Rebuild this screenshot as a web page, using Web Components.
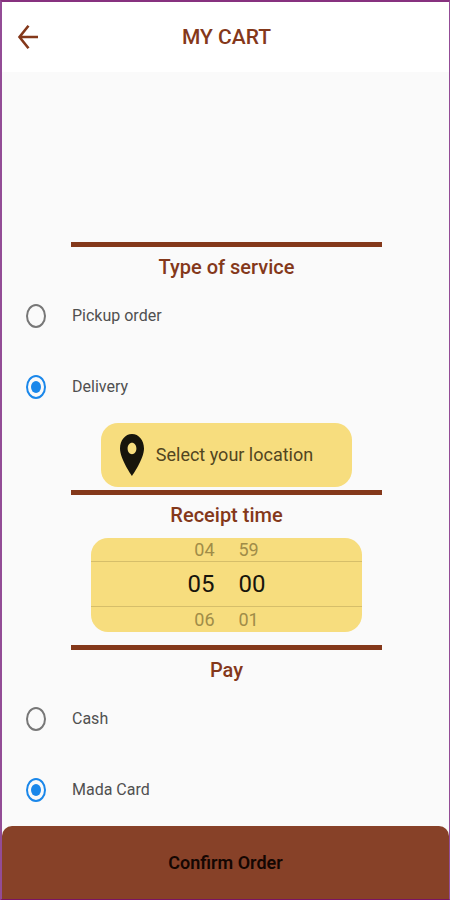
<!DOCTYPE html>
<html lang="en">
<head>
<meta charset="utf-8">
<meta name="viewport" content="width=device-width, initial-scale=1">
<title>My Cart</title>
<style>
  body { margin: 0; font-family: Roboto, "Liberation Sans", sans-serif; color: #505050; background: #fafafa;
    --brown: #84381a; --sand: #f7dd7e; --blue: #1a87ea; }
</style>
</head>
<body>
<cart-screen>
  <app-header slot="header">MY CART</app-header>
  <section-title>Type of service</section-title>
  <choice-list name="service" label="Type of service" options="Pickup order|Delivery" selected="Delivery"></choice-list>
  <location-button>Select your location</location-button>
  <section-title class="after-location">Receipt time</section-title>
  <time-picker hours="04 05 06" minutes="59 00 01"></time-picker>
  <section-title class="after-picker">Pay</section-title>
  <choice-list name="pay" label="Pay" options="Cash|Mada Card" selected="Mada Card"></choice-list>
  <confirm-bar slot="footer">Confirm Order</confirm-bar>
</cart-screen>

<script>
  const define = (name, html, setup) => customElements.define(name, class extends HTMLElement {
    connectedCallback() {
      if (this.shadowRoot) return;
      this.attachShadow({ mode: 'open' }).innerHTML = html;
      if (setup) setup(this, this.shadowRoot);
    }
  });

  define('cart-screen', `
    <style>
      :host { display: flex; flex-direction: column; box-sizing: border-box; min-height: 100vh;
        border: solid #934c96; border-width: 2px 1px 1px 2px; border-top-color: #87317f; border-bottom-color: #7a1464; }
      main { flex: 1; padding: 170px 0 0 2px; }
      ::slotted(location-button) { margin-top: 1px; }
      ::slotted(.after-location) { margin-top: 3px; }
      ::slotted(time-picker) { margin-top: 10px; }
      ::slotted(.after-picker) { margin-top: 13px; }
    </style>
    <slot name="header"></slot>
    <main><slot></slot></main>
    <slot name="footer"></slot>`);

  define('app-header', `
    <style>
      :host { display: block; background: #fff; color: var(--brown); }
      header { display: grid; grid-template-columns: 52px 1fr 50px; align-items: center; height: 70px; }
      button { display: grid; place-items: center; height: 48px; padding: 0; border: 0; background: none; color: inherit; cursor: pointer; }
      h1 { margin: 0; font-size: 21px; line-height: 28px; font-weight: 500; text-align: center; }
    </style>
    <header>
      <button type="button" aria-label="Back">
        <svg width="22" height="26" viewBox="0 0 22 26" fill="none" stroke="currentColor" stroke-width="2.6"><path d="M21 13H3M11.5 1.8L2.500 13l9 11.200"/></svg>
      </button>
      <h1><slot></slot></h1>
    </header>`);

  define('section-title', `
    <style>
      :host { display: block; color: var(--brown); }
      hr { width: 70%; height: 5px; margin: 0 auto; border: 0; background: var(--brown); }
      h2 { margin: 0; padding: 7px 0 0; font-size: 20px; line-height: 26px; font-weight: 500; text-align: center; }
    </style>
    <hr><h2><slot></slot></h2>`);

  define('choice-list', `
    <style>
      :host { display: block; }
      fieldset { margin: 0; padding: 0; border: 0; min-width: 0; }
      label { display: flex; align-items: center; gap: 26px; height: 71px; padding-left: 22px; font-size: 16px; line-height: 24px; cursor: pointer; }
      input { appearance: none; display: grid; place-items: center; flex: none; box-sizing: border-box; width: 20px; height: 24px; margin: 0; border: 2px solid #777; border-radius: 50%; }
      input:checked { border-color: var(--blue); }
      input:checked::before { content: ""; width: 10px; height: 12px; border-radius: 50%; background: var(--blue); }
    </style>
    <fieldset></fieldset>`, (host, root) => {
      const set = root.querySelector('fieldset');
      set.setAttribute('aria-label', host.getAttribute('label'));
      for (const text of host.getAttribute('options').split('|')) {
        const label = document.createElement('label');
        const input = document.createElement('input');
        input.type = 'radio';
        input.name = host.getAttribute('name');
        input.value = text;
        input.checked = text === host.getAttribute('selected');
        const span = document.createElement('span');
        span.textContent = text;
        label.append(input, span);
        set.append(label);
      }
    });

  define('location-button', `
    <style>
      :host { display: flex; justify-content: center; }
      button { display: flex; align-items: center; gap: 12px; height: 64px; padding: 0 39px 0 19px; border: 0; border-radius: 17px;
        background: var(--sand); color: #51451f; font: inherit; font-size: 18px; line-height: 26px; cursor: pointer; }
    </style>
    <button type="button">
      <svg width="24" height="42" viewBox="0 0 24 42" aria-hidden="true"><path fill="#17150c" fill-rule="evenodd" d="M12 0C5.200 0 0 6.200 0 14.500 0 25 12 42 12 42s12-17 12-27.500C24 6.200 18.800 0 12 0zm0 8.800c2.500 0 4.400 2.500 4.400 5.700s-1.900 5.700-4.400 5.700-4.400-2.500-4.400-5.700S9.500 8.800 12 8.800z"/></svg>
      <slot></slot>
    </button>`);

  define('time-picker', `
    <style>
      :host { display: block; }
      .wheel { display: grid; grid-template-columns: 1fr 1fr; grid-template-rows: 23px 46px 25px; column-gap: 24px; width: 61%; margin: 0 auto;
        border-radius: 17px; background: var(--sand); overflow: hidden; }
      .band { grid-area: 2 / 1 / 3 / 3; border: solid #d6be6a; border-width: 1px 0; }
      .column { display: grid; grid-row: 1 / 4; grid-template-rows: subgrid; align-items: center; color: #a08c48; font-size: 18px; line-height: 22px; }
      .hours { grid-column: 1; text-align: right; }
      .minutes { grid-column: 2; }
      [aria-selected="true"] { color: #17150c; font-size: 24px; line-height: 30px; }
    </style>
    <div class="wheel">
      <div class="band"></div>
      <div class="column hours" role="listbox" aria-label="Hour" tabindex="0"></div>
      <div class="column minutes" role="listbox" aria-label="Minute" tabindex="0"></div>
    </div>`, (host, root) => {
      for (const part of ['hours', 'minutes']) {
        const column = root.querySelector('.' + part);
        host.getAttribute(part).split(' ').forEach((value, i) => {
          const item = document.createElement('div');
          item.setAttribute('role', 'option');
          item.setAttribute('aria-selected', i === 1);
          item.textContent = value;
          column.append(item);
        });
      }
    });

  define('confirm-bar', `
    <style>
      :host { display: block; }
      button { display: block; width: 100%; height: 73px; padding: 0; border: 0; border-radius: 10px 10px 0 0;
        background: #874128; color: #140602; font: inherit; font-size: 18px; line-height: 24px; font-weight: 600; cursor: pointer; }
    </style>
    <button type="button"><slot></slot></button>`);
</script>
</body>
</html>
